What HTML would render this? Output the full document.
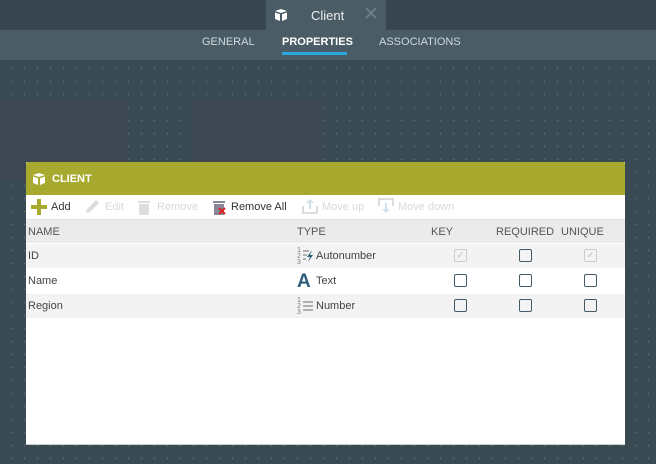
<!DOCTYPE html>
<html><head><style>
body{margin:0;width:656px;height:464px;overflow:hidden;font-family:"Liberation Sans",sans-serif;background:#37474f;position:relative}
.canvas{position:absolute;left:0;top:60px;width:656px;height:404px;background-color:#3a4a52;background-image:radial-gradient(circle,#586a73 0.7px,transparent 1px);background-size:13px 13px;background-position:5px 2px}
.top{position:absolute;left:0;top:0;width:656px;height:30px;background:#37464f}
.tab{position:absolute;left:266px;top:0;width:120px;height:30px;background:#4a5c66;color:#e8eef0;font-size:13px}
.sub{position:absolute;left:0;top:30px;width:656px;height:30px;background:#4a5c66}
.sub span{position:absolute;top:6px;font-size:11px;color:#cfd8dc}
.blk{position:absolute;top:100px;width:128px;height:80px;background:#3e4751}
.panel{position:absolute;left:26px;top:162px;width:599px;height:282px;background:#fff;border-bottom:1px solid #c8cccc}
.hdr{height:33px;background:#a8aa2f;color:#fff;font-weight:bold;font-size:11px;position:relative;border-radius:2px 2px 0 0}
.tb{height:24px;position:relative;font-size:11px;color:#333}
.tb span{position:absolute;top:6px}
.dis{color:#d6d9da}
.row{height:24px;position:relative;font-size:11px;color:#444;border-bottom:1px solid #fff}
.row span{position:absolute;top:6px}
.ch{height:23px;background:#ebebeb;color:#555;border-top:1px solid #e0e0e0}
.g{background:#f3f3f3}
.cb{position:absolute;top:5px;width:12px;height:12px;border:1px solid #455a64;border-radius:2px;box-sizing:border-box;width:13px;height:13px}
.cb.d{border-color:#ccc;color:#bbb;font-size:9px;line-height:11px;text-align:center}
</style></head><body>
<div class="canvas"></div>
<div class="blk" style="left:0"></div><div class="blk" style="left:193px"></div>
<div class="top"></div>
<div class="tab">
<svg style="position:absolute;left:8px;top:8px" width="14" height="14" viewBox="0 0 14 14"><path d="M1 3 L7 1 L13 3 L7 5Z" fill="#fff"/><path d="M1 4.5 L6 6.3 V13 L1 11Z M8 6.3 L13 4.5 V11 L8 13Z" fill="#fff"/></svg>
<span style="position:absolute;left:45px;top:8px">Client</span>
<span style="position:absolute;left:97px;top:3px;font-size:19px;color:#6f8089">✕</span></div>
<div class="sub">
<span style="left:202px">GENERAL</span>
<span style="left:282px;color:#fff;font-weight:bold">PROPERTIES</span>
<div style="position:absolute;left:282px;top:22px;width:65px;height:3px;background:#29a8e0"></div>
<span style="left:379px">ASSOCIATIONS</span></div>
<div class="panel">
<div class="hdr"><svg style="position:absolute;left:6px;top:10px" width="14" height="14" viewBox="0 0 14 14"><path d="M1 3 L7 1 L13 3 L7 5Z" fill="#fff"/><path d="M1 4.5 L6 6.3 V13 L1 11Z M8 6.3 L13 4.5 V11 L8 13Z" fill="#fff"/></svg><span style="position:absolute;left:26px;top:11px">CLIENT</span></div>
<div class="tb">
<svg style="position:absolute;left:5px;top:4px" width="16" height="16"><path d="M6 0h4v6h6v4h-6v6h-4v-6h-6v-4h6z" fill="#a8aa2f"/></svg><span style="left:25px">Add</span>
<svg style="position:absolute;left:58px;top:4px" width="16" height="16"><path d="M2 14 L3 10 L12 1 L15 4 L6 13Z" fill="#ddd"/></svg><span class="dis" style="left:79px">Edit</span>
<svg style="position:absolute;left:111px;top:4px" width="14" height="16"><path d="M1 2h12v2H1zM2 5h10v11H2z" fill="#ddd"/></svg><span class="dis" style="left:131px">Remove</span>
<svg style="position:absolute;left:186px;top:4px" width="16" height="16"><path d="M1 2h12v2H1zM2 5h10v11H2z" fill="#889"/><path d="M7 9l6 6M13 9l-6 6" stroke="#d22" stroke-width="2"/></svg><span style="left:205px">Remove All</span>
<svg style="position:absolute;left:276px;top:3px" width="16" height="16"><path d="M1 8v7h14V8" stroke="#ddd" stroke-width="2" fill="none"/><path d="M8 1l4 4h-3v6H7V5H4z" fill="#cfe0ea"/></svg><span class="dis" style="left:296px">Move up</span>
<svg style="position:absolute;left:352px;top:3px" width="16" height="16"><path d="M1 8V1h14v7" stroke="#ddd" stroke-width="2" fill="none"/><path d="M8 15l4-4h-3V5H7v6H4z" fill="#cfe0ea"/></svg><span class="dis" style="left:372px">Move down</span>
</div>
<div class="row ch"><span style="left:2px">NAME</span><span style="left:271px">TYPE</span><span style="left:405px">KEY</span><span style="left:470px">REQUIRED</span><span style="left:535px">UNIQUE</span></div>
<div class="row g"><span style="left:2px">ID</span><span style="left:271px;font-size:7px;top:4px;line-height:6px;color:#777">1<br>2<br>3</span><svg style="position:absolute;left:276px;top:5px" width="12" height="14"><path d="M1 2h6M1 6h4M1 10h3" stroke="#999" stroke-width="1.5"/><path d="M10 1 L5 8 H8 L6 13 L11 6 H8Z" fill="#2c5f7c"/></svg><span style="left:290px">Autonumber</span>
<div class="cb d" style="left:428px">✓</div><div class="cb" style="left:493px"></div><div class="cb d" style="left:558px">✓</div></div>
<div class="row"><span style="left:2px">Name</span><span style="left:271px;top:2px;font-size:19px;font-weight:bold;color:#2c5f7c">A</span><span style="left:290px">Text</span>
<div class="cb" style="left:428px"></div><div class="cb" style="left:493px"></div><div class="cb" style="left:558px"></div></div>
<div class="row g"><span style="left:2px">Region</span><span style="left:271px;font-size:7px;top:4px;line-height:6px;color:#777">1<br>2<br>3</span><svg style="position:absolute;left:276px;top:6px" width="12" height="12"><path d="M1 2h10M1 6h10M1 10h10" stroke="#999" stroke-width="1.5"/></svg><span style="left:290px">Number</span>
<div class="cb" style="left:428px"></div><div class="cb" style="left:493px"></div><div class="cb" style="left:558px"></div></div>
</div>
</body></html>
